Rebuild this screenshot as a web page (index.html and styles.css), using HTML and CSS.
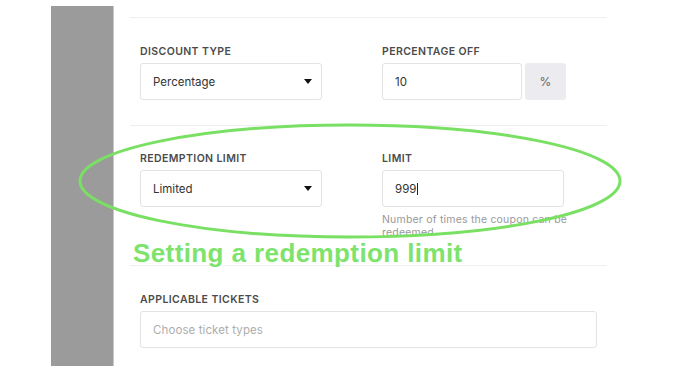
FILE: index.html
```html
<!DOCTYPE html>
<html>
<head>
<meta charset="utf-8">
<link rel="stylesheet" href="styles.css">
</head>
<body>
<div class="page">
  <div class="sidebar"></div>
  <main class="main">
    <section class="section s1">
      <div class="row">
        <div class="field">
          <div class="label">Discount type</div>
          <div class="control select"><span>Percentage</span><span class="caret"></span></div>
        </div>
        <div class="field">
          <div class="label">Percentage off</div>
          <div class="group">
            <div class="control input narrow"><span>10</span></div>
            <div class="addon">%</div>
          </div>
        </div>
      </div>
    </section>
    <section class="section s2">
      <div class="row">
        <div class="field">
          <div class="label">Redemption limit</div>
          <div class="control select"><span>Limited</span><span class="caret"></span></div>
        </div>
        <div class="field">
          <div class="label">Limit</div>
          <div class="control input wide"><span>999</span><span class="cursor"></span></div>
          <div class="help">Number of times the coupon can be redeemed</div>
        </div>
      </div>
    </section>
    <div class="caption">Setting a redemption limit</div>
    <section class="section s3">
      <div class="label">Applicable tickets</div>
      <div class="control input full"><span class="placeholder">Choose ticket types</span></div>
    </section>
  </main>
  <svg class="ring" width="679" height="381" viewBox="0 0 679 381">
    <ellipse cx="350" cy="181" rx="270" ry="56" fill="none" stroke="#79e063" stroke-width="3"/>
  </svg>
</div>
</body>
</html>
```
FILE: styles.css
```css
* { box-sizing: border-box; }
html, body { margin: 0; padding: 0; background: #fff; }
body { font-family: Inter, "Noto Sans", sans-serif; color: #333; }
.page {
  position: relative;
  width: 679px;
  height: 381px;
  display: flex;
  overflow: hidden;
}
.sidebar {
  margin-left: 51px;
  margin-top: 6px;
  width: 63px;
  height: 360px;
  background: #9b9b9b;
  border-right: 1px solid #c9c9c9;
}
.main {
  position: relative;
  margin-left: 16px;
  width: 477px;
  padding-top: 17px;
}
.section {
  border-top: 1px solid #efefef;
  padding-left: 10px;
}
.s1 { height: 108px; padding-top: 27px; }
.s2 { height: 140px; padding-top: 26px; overflow: hidden; }
.s3 { padding-top: 27px; }
.row {
  display: grid;
  grid-template-columns: 182px 1fr;
  column-gap: 60px;
}
.label {
  font-size: 10.5px;
  line-height: 13px;
  font-weight: 600;
  letter-spacing: 0.4px;
  text-transform: uppercase;
  color: #4b4b4b;
  margin-bottom: 5px;
}
.control {
  height: 37px;
  border: 1px solid #e3e3e3;
  border-radius: 3px;
  background: #fff;
  display: flex;
  align-items: center;
  padding: 0 12px;
  font-size: 11.5px;
  color: #333;
}
.select { justify-content: space-between; padding-right: 9px; }
.caret {
  width: 0; height: 0;
  border-left: 4px solid transparent;
  border-right: 4px solid transparent;
  border-top: 5px solid #111;
}
.group { display: flex; gap: 3px; }
.narrow { width: 140px; }
.wide { width: 182px; }
.full { width: 457px; }
.addon {
  width: 41px;
  height: 37px;
  border-radius: 3px;
  background: #ecebef;
  display: flex;
  align-items: center;
  justify-content: center;
  font-size: 12px;
  color: #666;
}
.cursor {
  display: inline-block;
  width: 1px;
  height: 12px;
  background: #222;
  margin-left: 1px;
}
.help {
  margin-top: 6px;
  font-size: 10.5px;
  line-height: 13px;
  letter-spacing: 0.2px;
  color: #999;
  width: 215px;
}
.placeholder { color: #adadad; letter-spacing: 0.1px; }
.caption {
  position: absolute;
  left: 3px;
  top: 236px;
  height: 29px;
  width: 474px;
  padding-top: 4px;
  background: #fff;
  font-family: "Liberation Sans", Arial, sans-serif;
  font-weight: 700;
  font-size: 26px;
  line-height: 26px;
  letter-spacing: 0.4px;
  color: #7de36c;
  white-space: nowrap;
}
.ring {
  position: absolute;
  left: 0;
  top: 0;
  pointer-events: none;
}
```
